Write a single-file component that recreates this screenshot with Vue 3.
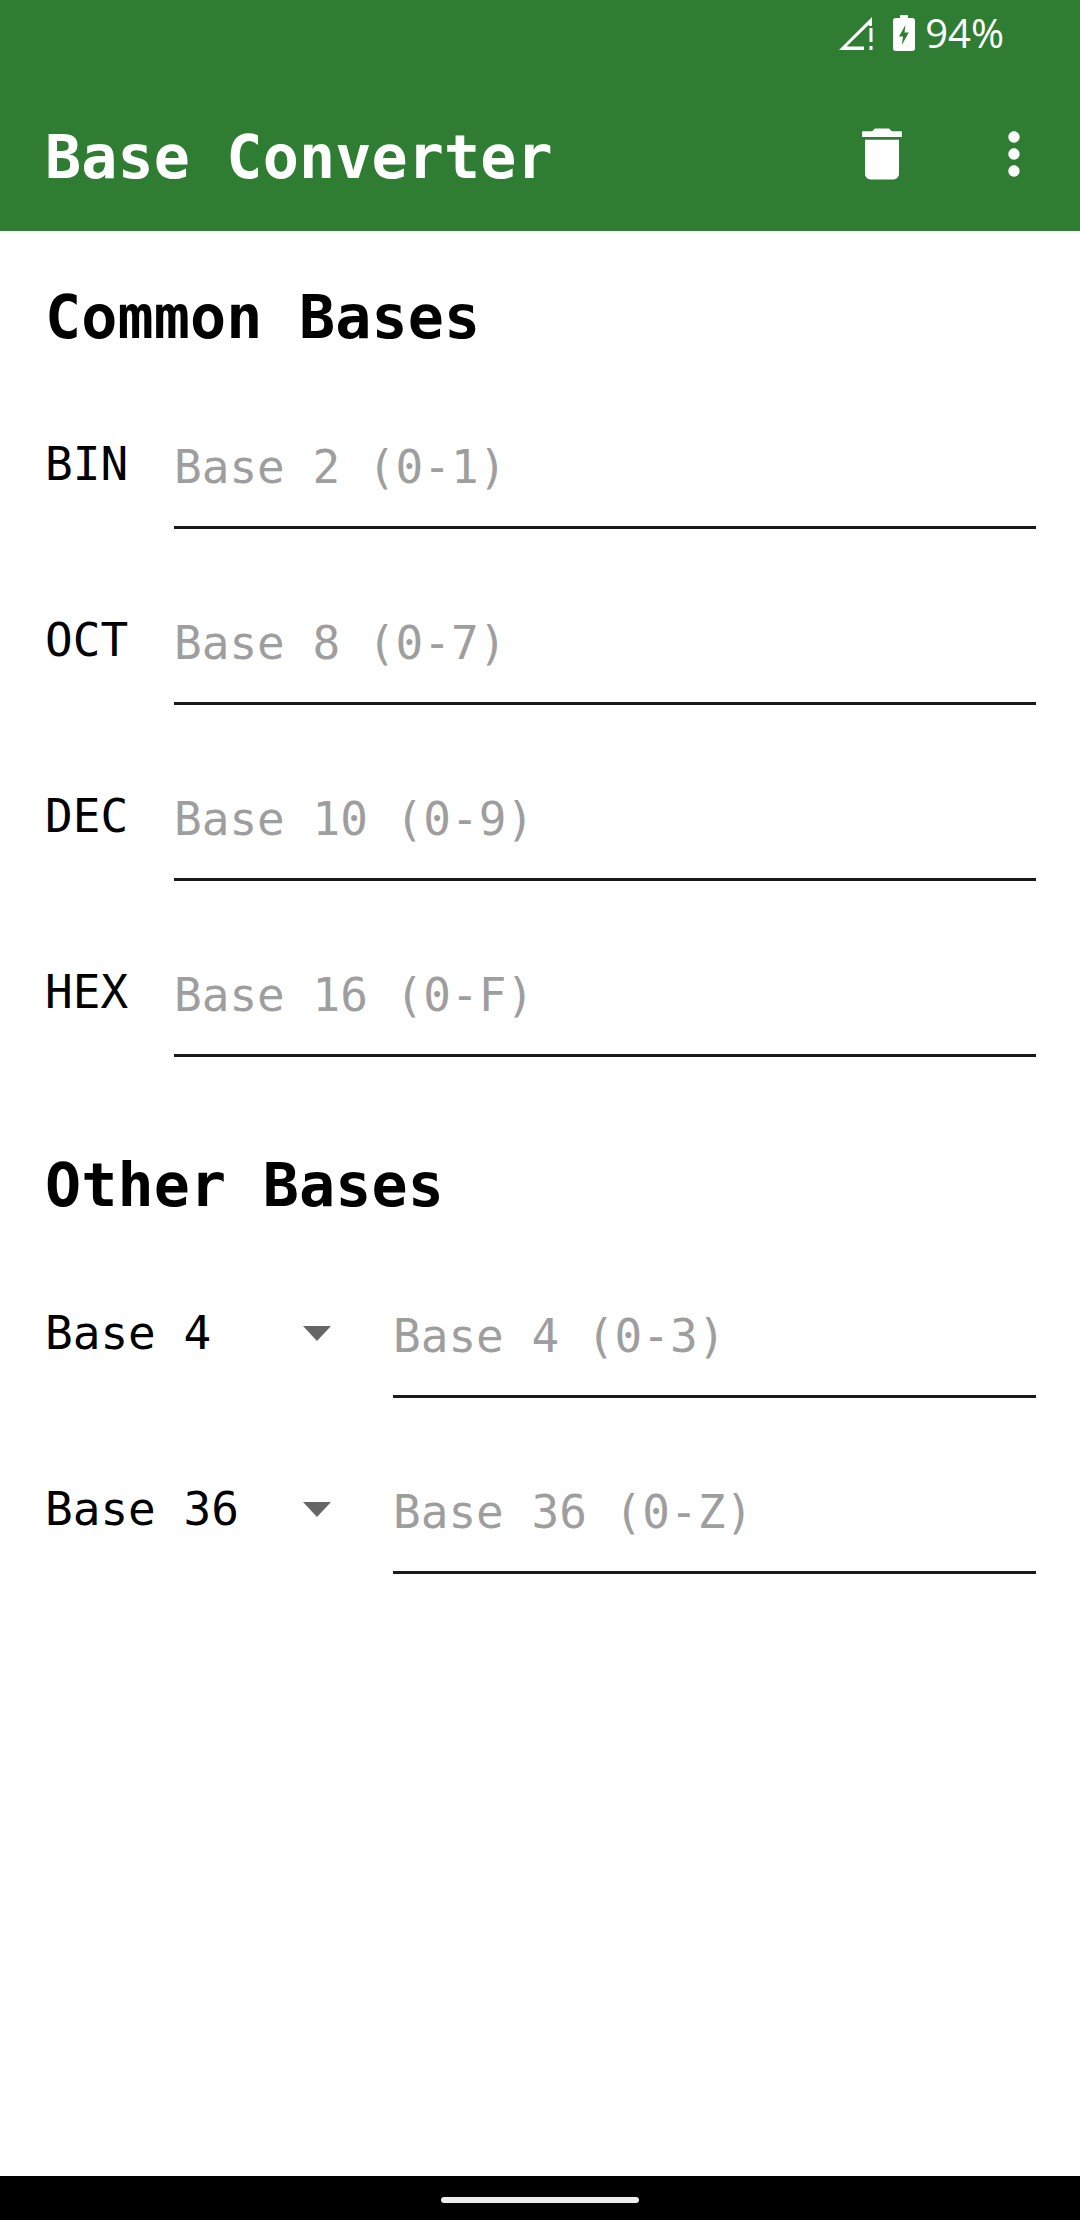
<template>
  <div class="screen">
    <header class="app-header">
      <div class="status-bar">
        <svg class="signal" width="34" height="33" viewBox="0 0 34 33">
          <path fill="#fff" d="M33 0V9H30V7.500L7.500 29.500H25V33H0Z" />
          <rect x="30.500" y="11" width="3" height="14" fill="#fff" />
          <rect x="30.500" y="29" width="3" height="4" fill="#fff" />
        </svg>
        <svg class="battery" width="22" height="36" viewBox="0 0 22 36">
          <path fill="#fff" fill-rule="evenodd" d="M7 0H15V3H19.500C20.900 3 22 4.100 22 5.500V33.500C22 34.900 20.900 36 19.500 36H2.500C1.100 36 0 34.900 0 33.500V5.500C0 4.100 1.100 3 2.500 3H7ZM12.500 10L6 21.500H10L8.800 30L15.800 17.500H11.500Z" />
        </svg>
        <span class="battery-level">94%</span>
      </div>
      <div class="toolbar">
        <h1 class="app-title">Base Converter</h1>
        <svg class="toolbar-icon trash" viewBox="0 0 24 24">
          <path fill="#fff" d="M6 19c0 1.100.9 2 2 2h8c1.100 0 2-.9 2-2V7H6v12zM19 4h-3.500l-1-1h-5l-1 1H5v2h14V4z" />
        </svg>
        <svg class="toolbar-icon more" viewBox="0 0 24 24">
          <path fill="#fff" d="M12 8c1.100 0 2-.9 2-2s-.9-2-2-2-2 .9-2 2 .9 2 2 2zm0 2c-1.100 0-2 .9-2 2s.9 2 2 2 2-.9 2-2-.9-2-2-2zm0 6c-1.100 0-2 .9-2 2s.9 2 2 2 2-.9 2-2-.9-2-2-2z" />
        </svg>
      </div>
    </header>

    <main class="content">
      <h2 class="section-title">Common Bases</h2>
      <div v-for="row in commonBases" :key="row.label" class="row">
        <span class="row-label">{{ row.label }}</span>
        <input class="field" type="text" :placeholder="row.hint" />
      </div>

      <h2 class="section-title other">Other Bases</h2>
      <div v-for="row in otherBases" :key="row.label" class="row">
        <div class="spinner">
          <span class="spinner-text">{{ row.label }}</span>
          <span class="spinner-arrow"></span>
        </div>
        <input class="field" type="text" :placeholder="row.hint" />
      </div>
    </main>

    <footer class="nav-bar">
      <div class="nav-handle"></div>
    </footer>
  </div>
</template>

<script setup>
const commonBases = [
  { label: 'BIN', hint: 'Base 2 (0-1)' },
  { label: 'OCT', hint: 'Base 8 (0-7)' },
  { label: 'DEC', hint: 'Base 10 (0-9)' },
  { label: 'HEX', hint: 'Base 16 (0-F)' }
]

const otherBases = [
  { label: 'Base 4', hint: 'Base 4 (0-3)' },
  { label: 'Base 36', hint: 'Base 36 (0-Z)' }
]
</script>

<style scoped>
.screen {
  display: flex;
  flex-direction: column;
  width: 1080px;
  height: 2220px;
  overflow: hidden;
  background: #fff;
  font-family: "DejaVu Sans Mono", "Liberation Mono", monospace;
}

.app-header {
  flex: none;
  height: 231px;
  background: #2e7d32;
}

/* Status bar */
.status-bar {
  display: flex;
  align-items: flex-start;
  justify-content: flex-end;
  height: 72px;
  padding: 15px 76px 0 0;
  box-sizing: border-box;
}

.signal {
  margin-top: 2px;
}

.battery {
  margin-left: 20px;
}

.battery-level {
  margin-left: 10px;
  color: #fff;
  font-family: "Open Sans", sans-serif;
  font-size: 40px;
  line-height: 36px;
}

/* Toolbar */
.toolbar {
  display: flex;
  align-items: center;
  height: 159px;
  padding: 5px 32px 0 45px;
  box-sizing: border-box;
}

.app-title {
  flex: 1;
  margin: 0;
  padding-top: 6px;
  color: #fff;
  font-size: 60px;
  font-weight: 700;
  line-height: 76px;
  letter-spacing: 0.15px;
}

.toolbar-icon {
  width: 68px;
  height: 68px;
}

.trash {
  margin-right: 64px;
}

/* Form */
.content {
  flex: 1;
  padding: 0 44px 0 45px;
}

.section-title {
  height: 122px;
  margin: 0;
  padding-top: 48px;
  box-sizing: border-box;
  color: #000;
  font-size: 60px;
  font-weight: 700;
  line-height: 76px;
  letter-spacing: 0.15px;
}

.section-title.other {
  height: 165px;
  padding-top: 90px;
}

.row {
  display: flex;
  align-items: flex-end;
  height: 176px;
}

.row-label {
  width: 129px;
  margin-bottom: 38px;
  color: #000;
  font-size: 46px;
  line-height: 54px;
}

.spinner {
  display: flex;
  align-items: center;
  width: 348px;
  margin-bottom: 38px;
}

.spinner-text {
  width: 258px;
  color: #000;
  font-size: 46px;
  line-height: 54px;
}

.spinner-arrow {
  width: 0;
  height: 0;
  border-top: 15px solid #666;
  border-left: 14px solid transparent;
  border-right: 14px solid transparent;
}

.field {
  flex: 1;
  min-width: 0;
  height: 100px;
  padding: 0 0 22px;
  border: 0;
  border-bottom: 3px solid #1a1a1a;
  border-radius: 0;
  outline: none;
  box-sizing: border-box;
  background: transparent;
  color: #000;
  font-family: inherit;
  font-size: 46px;
}

.field::placeholder {
  color: #9e9e9e;
  opacity: 1;
}

/* Navigation bar */
.nav-bar {
  display: flex;
  flex: none;
  align-items: flex-start;
  justify-content: center;
  height: 44px;
  padding-top: 21px;
  box-sizing: border-box;
  background: #000;
}

.nav-handle {
  width: 198px;
  height: 6px;
  border-radius: 3px;
  background: #eee;
}
</style>
